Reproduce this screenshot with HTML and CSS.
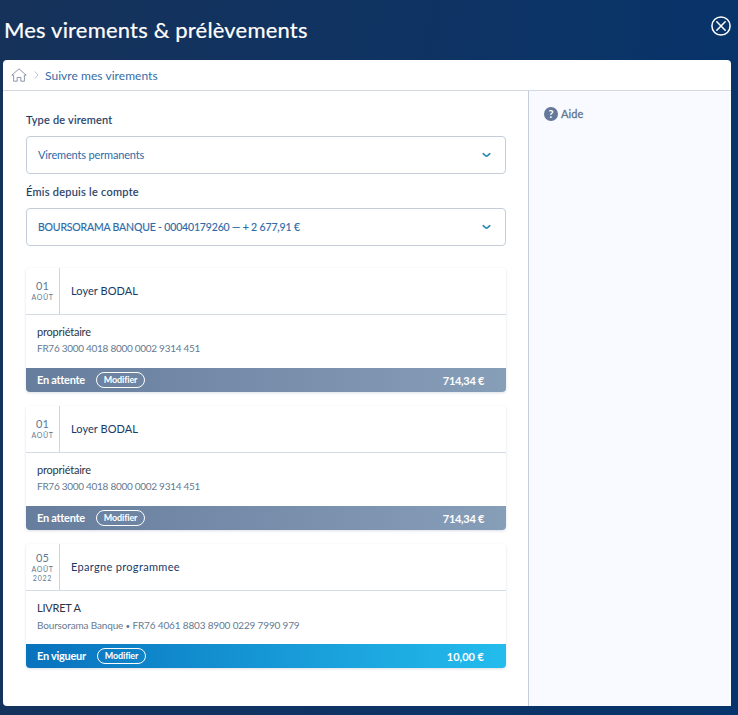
FILE: index.html
```
<!DOCTYPE html>
<html lang="fr">
<head>
<meta charset="utf-8">
<title>Mes virements &amp; prélèvements</title>
<link rel="stylesheet" href="styles.css">
</head>
<body>
<header class="topbar">
  <h1 class="title">Mes virements &amp; prélèvements</h1>
  <svg class="close" viewBox="0 0 20 20"><circle cx="10" cy="10" r="9.1"/><path d="M5.8 5.8l8.4 8.4M14.2 5.8l-8.4 8.4"/></svg>
</header>
<div class="panel">
  <nav class="crumbs">
    <svg class="home" viewBox="0 0 16 14"><path d="M2.6 7.200H.8L8 .8l7.200 6.400h-1.800v6H9.800V9.400H6.200v3.800H2.600z"/></svg>
    <svg class="sep" viewBox="0 0 5 8"><path d="M.8.5L4 4 .8 7.500"/></svg>
    <a class="crumb">Suivre mes virements</a>
  </nav>
  <div class="columns">
    <main class="main">
      <label class="label label-type">Type de virement</label>
      <div class="select"><span class="value-type">Virements permanents</span><svg class="chevron" viewBox="0 0 9 6"><path d="M1.200 1.700L3.600 3.800Q4.500 4.400 5.400 3.800L7.800 1.700"/></svg></div>
      <label class="label label-account">Émis depuis le compte</label>
      <div class="select"><span class="value-account">BOURSORAMA BANQUE - 00040179260 — + 2 677,91 €</span><svg class="chevron" viewBox="0 0 9 6"><path d="M1.200 1.700L3.600 3.800Q4.500 4.400 5.400 3.800L7.800 1.700"/></svg></div>
      <section class="cards">
        <article class="card">
          <div class="card-head">
            <div class="date"><span class="day">01</span><span class="month">AOÛT</span></div>
            <div class="name">Loyer BODAL</div>
          </div>
          <div class="card-body"><div class="holder">propriétaire</div><div class="iban">FR76 3000 4018 8000 0002 9314 451</div></div>
          <div class="card-foot"><span class="status">En attente</span><a class="edit">Modifier</a><span class="amount">714,34 €</span></div>
        </article>
        <article class="card">
          <div class="card-head">
            <div class="date"><span class="day">01</span><span class="month">AOÛT</span></div>
            <div class="name">Loyer BODAL</div>
          </div>
          <div class="card-body"><div class="holder">propriétaire</div><div class="iban">FR76 3000 4018 8000 0002 9314 451</div></div>
          <div class="card-foot"><span class="status">En attente</span><a class="edit">Modifier</a><span class="amount">714,34 €</span></div>
        </article>
        <article class="card card-active">
          <div class="card-head">
            <div class="date"><span class="day">05</span><span class="month">AOÛT</span><span class="year">2022</span></div>
            <div class="name name-wide">Epargne programmee</div>
          </div>
          <div class="card-body"><div class="holder">LIVRET A</div><div class="iban iban-wide">Boursorama Banque <span class="dot">•</span> FR76 4061 8803 8900 0229 7990 979</div></div>
          <div class="card-foot"><span class="status">En vigueur</span><a class="edit">Modifier</a><span class="amount amount-short">10,00 €</span></div>
        </article>
      </section>
    </main>
    <aside class="side">
      <span class="help-icon">?</span><span class="help">Aide</span>
    </aside>
  </div>
</div>
</body>
</html>
```
FILE: styles.css
```
* { box-sizing: border-box; }
body {
  margin: 0;
  height: 715px;
  overflow: hidden;
  padding: 0 7px 9px 3px;
  display: flex;
  flex-direction: column;
  background: linear-gradient(100deg, #16325a 0%, #0f3362 45%, #06346c 100%);
  font-family: Lato, "Liberation Sans", sans-serif;
  font-size: 11px;
  color: #183a66;
}
svg { fill: none; flex: none; display: block; }
.topbar {
  height: 60px;
  flex: none;
  display: flex;
  justify-content: space-between;
  padding: 16px 0 0 1px;
}
.title {
  margin: 0;
  font-size: 22px;
  line-height: 27px;
  font-weight: 400;
  letter-spacing: .19px;
  color: #fff;
  -webkit-text-stroke: .2px #fff;
}
.close {
  width: 20px;
  height: 20px;
  stroke: #fff;
  stroke-width: 1.5;
  stroke-linecap: round;
}
.panel {
  flex: 1;
  display: flex;
  flex-direction: column;
  background: #fff;
  border-radius: 4px 4px 0 4px;
  overflow: hidden;
}
.crumbs {
  height: 31px;
  flex: none;
  display: flex;
  align-items: center;
  padding-left: 8px;
  border-bottom: 1px solid #d5dae2;
}
.home { width: 16px; height: 14px; stroke: #747e95; stroke-width: .8; stroke-linejoin: round; }
.sep { width: 5px; height: 8px; margin: 0 8px 0 7px; stroke: #a9b2c1; stroke-width: .8; }
.crumb { font-size: 12px; line-height: 16px; letter-spacing: .05px; margin-top: 2px; margin-left: -2px; color: #366da6; }
.columns { flex: 1; display: flex; }
.main { width: 525px; padding: 20px 22px 0 23px; }
.side {
  flex: 1;
  display: flex;
  align-items: flex-start;
  gap: 3px;
  padding: 16px 0 0 15px;
  background: #f8faff;
  border-left: 1px solid #c6ceda;
}
.help-icon {
  width: 14px;
  height: 14px;
  border-radius: 50%;
  background: #65789a;
  color: #fff;
  font-size: 11px;
  line-height: 14px;
  font-weight: 700;
  text-align: center;
}
.help { line-height: 14px; color: #60758f; -webkit-text-stroke: .3px #60758f; letter-spacing: .1px; }
.label { display: block; height: 18px; line-height: 18px; margin-bottom: 7px; color: #1c3963; -webkit-text-stroke: .15px #1c3963; }
.label-type { letter-spacing: .2px; }
.label-account { letter-spacing: .26px; margin-top: 9px; }
.select {
  height: 38px;
  display: flex;
  align-items: center;
  justify-content: space-between;
  padding: 0 14px 0 11px;
  border: 1px solid #c4ccd8;
  border-radius: 4px;
  color: #2e6aa8;
}
.value-type { letter-spacing: -.16px; padding-bottom: 2px; }
.value-account { font-size: 10.5px; letter-spacing: -.17px; white-space: nowrap; -webkit-text-stroke: .15px #2e6aa8; }
.chevron { width: 9px; height: 6px; stroke: #2587b5; stroke-width: 1.6; stroke-linecap: round; }
.cards { margin-top: 22px; display: flex; flex-direction: column; gap: 14px; }
.card {
  height: 124px;
  display: flex;
  flex-direction: column;
  border-radius: 4px;
  box-shadow: 0 1px 3px rgba(30, 58, 100, .16);
  overflow: hidden;
}
.card-head { height: 47px; display: flex; border-bottom: 1px solid #d3dbe5; }
.date {
  width: 34px;
  display: flex;
  flex-direction: column;
  align-items: center;
  justify-content: center;
  border-right: 1px solid #c9d6e3;
  color: #617a94;
}
.day { line-height: 12px; }
.month { font-size: 7px; line-height: 10px; letter-spacing: .6px; }
.year { font-size: 7px; line-height: 8px; letter-spacing: .8px; }
.name { padding-left: 11px; line-height: 45px; letter-spacing: .05px; }
.name-wide { letter-spacing: .32px; line-height: 46px; }
.card-body { height: 53px; padding: 9px 11px 0; white-space: nowrap; }
.holder { line-height: 16px; letter-spacing: -.22px; color: #2d3542; }
.iban { font-size: 10px; line-height: 16px; letter-spacing: -.28px; color: #667a91; }
.iban-wide { letter-spacing: -.16px; padding-top: 1px; }
.dot { font-size: 8px; }
.card-foot {
  height: 24px;
  display: flex;
  align-items: center;
  padding: 0 22px 0 11px;
  background: linear-gradient(90deg, #677d9d, #879eb9);
  color: #fff;
  font-weight: 700;
}
.card-active .card-foot { background: linear-gradient(90deg, #0872bd, #24bced); }
.status { letter-spacing: -.28px; padding-bottom: 1px; }
.edit {
  height: 16px;
  margin-left: 11px;
  padding: 0 7px;
  border: 1px solid #fff;
  border-radius: 8px;
  font-size: 9px;
  line-height: 13px;
  letter-spacing: -.15px;
}
.amount { margin-left: auto; letter-spacing: -.3px; }
.amount-short { letter-spacing: 0; }
```
